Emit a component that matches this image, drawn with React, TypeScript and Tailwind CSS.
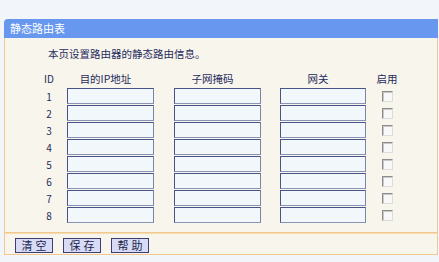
import React from "react";

const rows = [1, 2, 3, 4, 5, 6, 7, 8];

const font = {
  fontFamily: '"Noto Sans CJK SC", "Liberation Sans", sans-serif',
};

const Field = ({ w }: { w: string }) => (
  <input
    type="text"
    className={`${w} h-[16px] bg-[#f2f7fb] border border-[#45558a] border-r-[#7a84a8] border-b-[#8a93b3] outline-none`}
  />
);

const Check = () => (
  <div className="w-[11px] h-[11px] border border-[#8c8c8c] border-r-[#dcdcdc] border-b-[#dcdcdc] bg-[#f8f8f8] shadow-[inset_1px_1px_0_#c8c8c8]" />
);

const Btn = ({ label }: { label: string }) => (
  <button className="h-[15px] w-[38px] bg-[#d8dbf6] border border-[#3c3f70] text-[11px] leading-[13px] text-[#1a1f4a] tracking-[3px] pl-[3px]">
    {label}
  </button>
);

export default function App() {
  return (
    <div
      className="w-[439px] h-[262px] bg-[#f2f6fa] pt-[19px] pl-[4px] text-[#1f2b5c]"
      style={font}
    >
      <div className="w-[434px]">
        {/* title bar */}
        <div className="h-[19px] bg-[#6797ee] rounded-tl-[4px] text-white text-[11px] leading-[19px] pl-[6px]">
          静态路由表
        </div>

        {/* body */}
        <div className="bg-[#f8f5ec] border-x border-[#f0c890] border-b h-[195px] text-[10.5px]">
          <div className="pl-[43px] pt-[9px] h-[33px] leading-[14px]">
            本页设置路由器的静态路由信息。
          </div>

          {/* labels */}
          <div className="flex items-center h-[16px] leading-[14px]">
            <div className="w-[33px]" />
            <div className="w-[22px] text-center text-[10px]">ID</div>
            <div className="w-[7px]" />
            <div className="w-[87px] text-center pr-[10px]">目的IP地址</div>
            <div className="w-[20px]" />
            <div className="w-[87px] text-center pr-[10px]">子网掩码</div>
            <div className="w-[19px]" />
            <div className="w-[86px] text-center pr-[10px]">网关</div>
            <div className="w-[10px]" />
            <div className="w-[22px] text-center">启用</div>
          </div>

          {/* entries */}
          <div className="flex flex-col gap-[1px] pt-[1px]">
            {rows.map((n) => (
              <div key={n} className="flex items-center h-[16px]">
                <div className="w-[33px]" />
                <div className="w-[22px] text-center text-[10px]">{n}</div>
                <div className="w-[7px]" />
                <Field w="w-[87px]" />
                <div className="w-[20px]" />
                <Field w="w-[87px]" />
                <div className="w-[19px]" />
                <Field w="w-[86px]" />
                <div className="w-[16px]" />
                <Check />
              </div>
            ))}
          </div>
        </div>

        {/* footer */}
        <div className="bg-[#f8f5ec] border-x border-b border-t border-t-[#f7dcb0] border-[#f0c890] h-[22px] flex items-start gap-[10px] pl-[10px] pt-[4px]">
          <Btn label="清空" />
          <Btn label="保存" />
          <Btn label="帮助" />
        </div>
      </div>
    </div>
  );
}
